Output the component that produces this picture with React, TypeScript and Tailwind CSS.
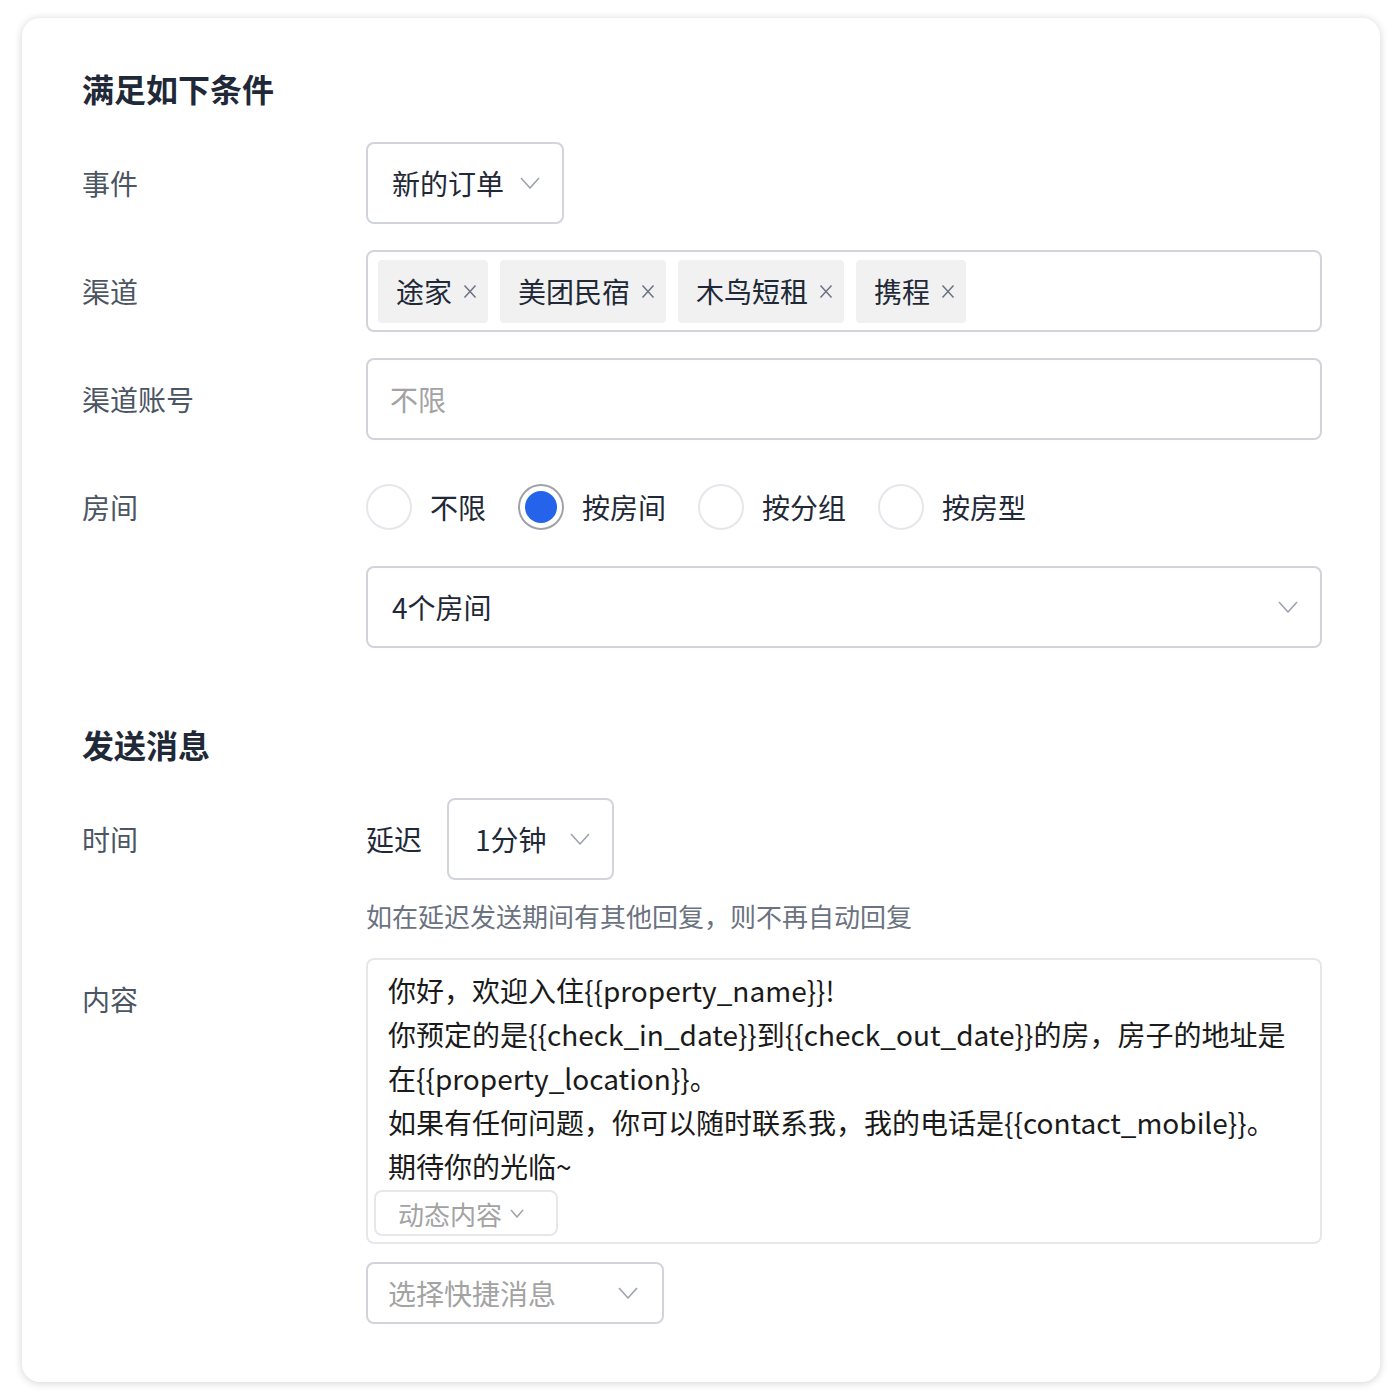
import React from "react";

const Chevron = ({ className = "" }: { className?: string }) => (
  <svg className={className} width="20" height="12" viewBox="0 0 20 12" fill="none">
    <polyline points="1,1 10,11 19,1" stroke="#9ca3af" strokeWidth="1.6" strokeLinejoin="round" />
  </svg>
);

const CloseX = () => (
  <svg width="14" height="15" viewBox="0 0 14 15" fill="none">
    <path d="M1.5 1.5l11 12M12.5 1.5l-11 12" stroke="#6b7280" strokeWidth="1.5" />
  </svg>
);

const Row = ({
  label,
  top = false,
  children,
}: {
  label: string;
  top?: boolean;
  children: React.ReactNode;
}) => (
  <div className={`flex ${top ? "items-start" : "items-center"}`}>
    <div className="w-[284px] shrink-0 h-[82px] flex items-center text-[28px] text-[#4b5563]">
      {label}
    </div>
    <div className="flex-1 min-w-0">{children}</div>
  </div>
);

const channels = ["途家", "美团民宿", "木鸟短租", "携程"];
const roomOptions = ["不限", "按房间", "按分组", "按房型"];

export default function App() {
  return (
    <div
      className="min-h-[1400px] bg-white pt-[18px] pl-[22px] pr-[20px]"
      style={{ fontFamily: '"Noto Sans CJK SC", "Noto Sans", sans-serif' }}
    >
      <div className="h-[1364px] rounded-[18px] bg-white shadow-[0_1px_8px_rgba(0,0,0,0.18)] pt-[48px] pl-[60px] pr-[58px]">
        <h2 className="text-[32px] leading-[44px] font-bold text-[#1f2937]">满足如下条件</h2>

        <div className="mt-[32px] flex flex-col gap-[26px]">
          <Row label="事件">
            <div className="inline-flex items-center h-[82px] w-[198px] border-2 border-[#d1d5db] rounded-[8px] pl-[24px] pr-[22px] justify-between text-[28px] text-[#1f2937]">
              <span>新的订单</span>
              <Chevron />
            </div>
          </Row>

          <Row label="渠道">
            <div className="flex items-center h-[82px] border-2 border-[#d1d5db] rounded-[8px] pl-[10px] gap-[12px]">
              {channels.map((c) => (
                <div
                  key={c}
                  className="flex items-center h-[63px] bg-[#f1f1f1] rounded-[4px] pl-[18px] pr-[11px] gap-[11px] text-[28px] text-[#1f2937]"
                >
                  <span>{c}</span>
                  <CloseX />
                </div>
              ))}
            </div>
          </Row>

          <Row label="渠道账号">
            <div className="flex items-center h-[82px] border-2 border-[#d1d5db] rounded-[8px] pl-[22px] text-[28px] text-[#a3a3a3]">
              不限
            </div>
          </Row>

          <Row label="房间">
            <div className="flex items-center h-[82px]">
              {roomOptions.map((o, i) => (
                <div key={o} className="flex items-center mr-[32px]">
                  {i === 1 ? (
                    <div className="w-[46px] h-[46px] rounded-full border-2 border-[#a1a1aa] flex items-center justify-center">
                      <div className="w-[32px] h-[32px] rounded-full bg-[#2563eb]" />
                    </div>
                  ) : (
                    <div className="w-[46px] h-[46px] rounded-full border-2 border-[#e5e7eb]" />
                  )}
                  <span className="ml-[18px] text-[28px] text-[#1f2937]">{o}</span>
                </div>
              ))}
            </div>
          </Row>
        </div>

        <div className="mt-[18px] ml-[284px] flex items-center justify-between h-[82px] border-2 border-[#d1d5db] rounded-[8px] pl-[24px] pr-[22px] text-[28px] text-[#1f2937]">
          <span>4个房间</span>
          <Chevron />
        </div>

        <h2 className="mt-[74px] text-[32px] leading-[44px] font-bold text-[#1f2937]">发送消息</h2>

        <div className="mt-[32px]">
          <Row label="时间">
            <div className="flex items-center">
              <span className="text-[28px] text-[#1f2937] mr-[25px]">延迟</span>
              <div className="flex items-center justify-between h-[82px] w-[167px] border-2 border-[#d1d5db] rounded-[8px] pl-[26px] pr-[22px] text-[28px] text-[#1f2937]">
                <span>1分钟</span>
                <Chevron />
              </div>
            </div>
          </Row>
        </div>

        <p className="mt-[18px] ml-[284px] text-[26px] leading-[36px] text-[#6b7280]">
          如在延迟发送期间有其他回复，则不再自动回复
        </p>

        <div className="mt-[24px]">
          <Row label="内容" top>
            <div className="h-[286px] border-2 border-[#e5e7eb] rounded-[8px] pt-[8px] px-[6px]">
              <div className="px-[14px] text-[28px] leading-[44px] text-[#1a1a1a] whitespace-nowrap">
                <div>你好，欢迎入住{"{{property_name}}"}!</div>
                <div>你预定的是{"{{check_in_date}}"}到{"{{check_out_date}}"}的房，房子的地址是</div>
                <div>在{"{{property_location}}"}。</div>
                <div>如果有任何问题，你可以随时联系我，我的电话是{"{{contact_mobile}}"}。</div>
                <div>期待你的光临~</div>
              </div>
              <div className="mt-[2px] inline-flex items-center h-[46px] w-[184px] border-2 border-[#e5e7eb] rounded-[8px] pl-[22px] gap-[8px] text-[26px] text-[#a3a3a3]">
                <span>动态内容</span>
                <svg width="14" height="9" viewBox="0 0 14 9" fill="none">
                  <polyline points="1,1 7,8 13,1" stroke="#a3a3a3" strokeWidth="1.5" />
                </svg>
              </div>
            </div>
          </Row>
        </div>

        <div className="mt-[18px] ml-[284px] flex items-center justify-between h-[62px] w-[298px] border-2 border-[#d1d5db] rounded-[8px] pl-[20px] pr-[24px] text-[28px] text-[#a3a3a3]">
          <span>选择快捷消息</span>
          <Chevron />
        </div>
      </div>
    </div>
  );
}
